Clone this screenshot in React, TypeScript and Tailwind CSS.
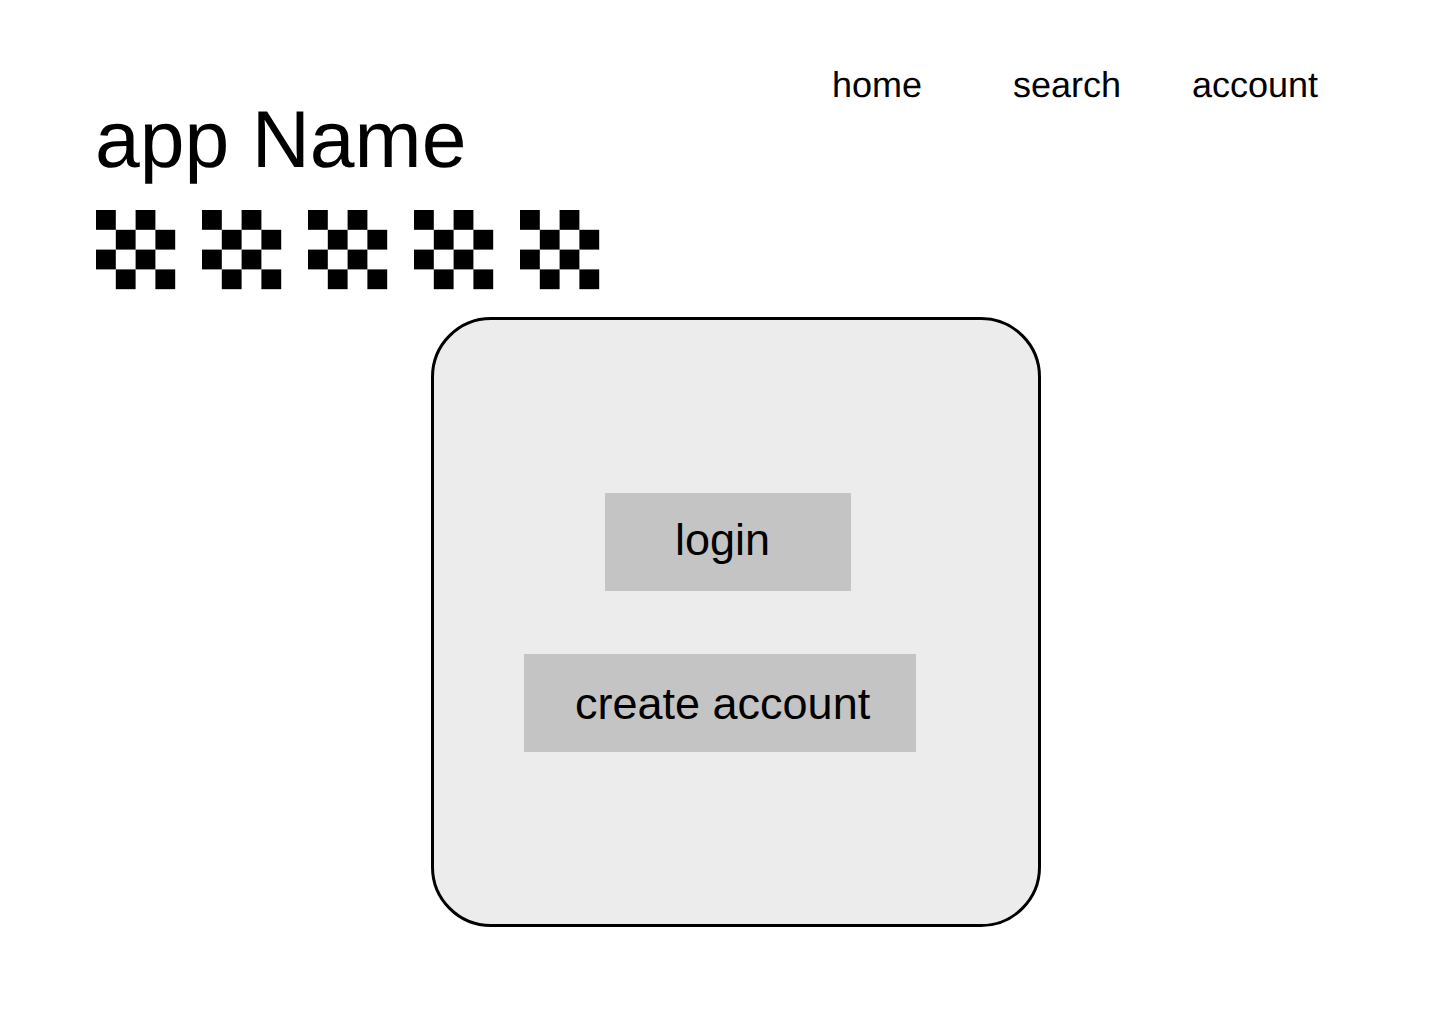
const navItems = [
  { label: 'home', width: 'w-[181px]' },
  { label: 'search', width: 'w-[179px]' },
  { label: 'account', width: 'w-[126px]' },
]

function CheckerIcon() {
  const cells = [
    [0, 0],
    [2, 0],
    [1, 1],
    [3, 1],
    [0, 2],
    [2, 2],
    [1, 3],
    [3, 3],
  ]
  return (
    <svg width="80" height="80" viewBox="0 0 80 80" className="shrink-0">
      {cells.map(([x, y]) => (
        <rect key={`${x}-${y}`} x={x * 19.8} y={y * 19.8} width="19.8" height="19.8" fill="#000" />
      ))}
    </svg>
  )
}

export default function App() {
  return (
    <div className="h-[1024px] w-[1440px] overflow-hidden bg-white font-['Liberation_Sans',Arial,sans-serif] text-black [text-rendering:geometricPrecision]">
      <header className="flex items-start pl-[96px] pt-[96px]">
        <div className="w-[736px]">
          <h1 className="-ml-px text-[80.5px] leading-[88px] font-normal">app Name</h1>
          <div className="mt-[26px] flex gap-[26px]">
            {[0, 1, 2, 3, 4].map((i) => (
              <CheckerIcon key={i} />
            ))}
          </div>
        </div>
        <nav className="-mt-[31px] flex">
          {navItems.map((item) => (
            <a key={item.label} className={`${item.width} text-[36px] leading-[40px]`}>
              {item.label}
            </a>
          ))}
        </nav>
      </header>

      <main className="mt-[27px] ml-[431px] flex h-[610px] w-[610px] flex-col rounded-[60px] border-[3px] border-black bg-[#ececec] pt-[173px]">
        <button
          type="button"
          className="ml-[171px] h-[98px] w-[246px] bg-[#c4c4c4] pb-[4px] pl-[70px] text-left text-[45px] leading-[52px]"
        >
          login
        </button>
        <button
          type="button"
          className="mt-[63px] ml-[90px] h-[98px] w-[392px] bg-[#c4c4c4] pt-[2px] pl-[51px] text-left text-[45px] leading-[52px]"
        >
          create account
        </button>
      </main>
    </div>
  )
}
